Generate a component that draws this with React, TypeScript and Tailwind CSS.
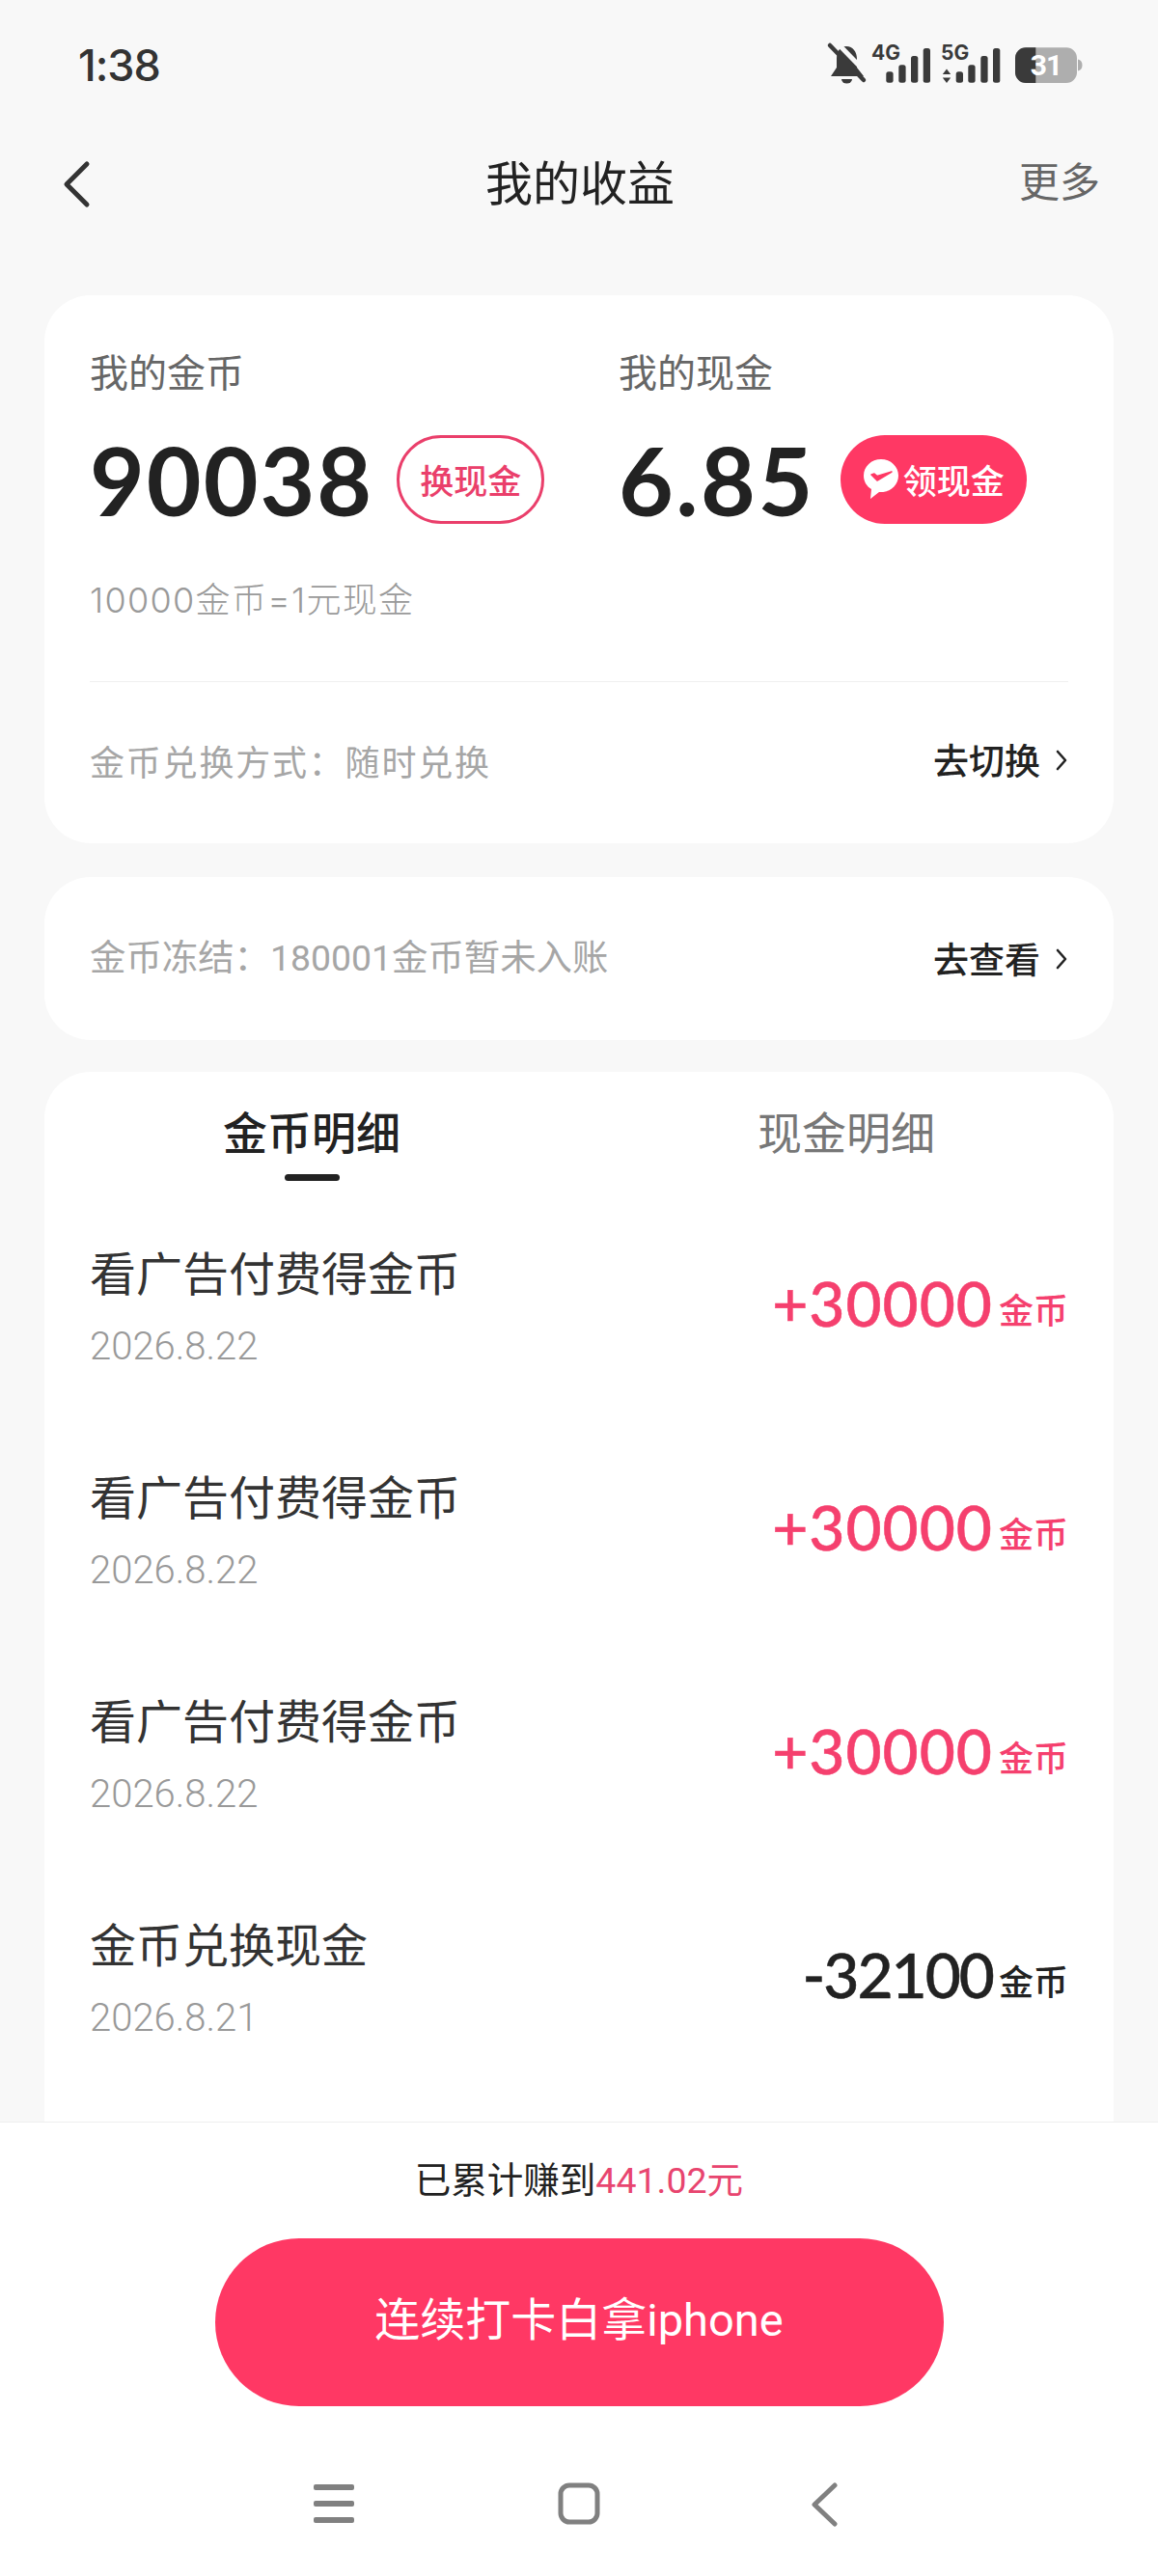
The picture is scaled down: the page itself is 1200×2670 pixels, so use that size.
import React from "react";

const Chevron = () => (
  <svg width="14" height="24" viewBox="0 0 14 24" className="ml-[15px]" fill="none">
    <path d="M3 3l8 9-8 9" stroke="#222" strokeWidth="2.6" strokeLinecap="round" strokeLinejoin="round" />
  </svg>
);

const StatusIcons = () => (
  <svg width="270" height="52" viewBox="0 0 270 52">
    <path d="M25 6C32 6 36 12 36 19L36 28L43 37L9 37L15 28L15 19C15 12 18 6 25 6Z" fill="#3a3a3a" />
    <path d="M20 40h11a5.500 4.500 0 0 1-11 0Z" fill="#3a3a3a" />
    <path d="M14 1L49 37" stroke="#f8f8f8" strokeWidth="5" />
    <path d="M8 5L43 41" stroke="#3a3a3a" strokeWidth="4.500" strokeLinecap="round" />
    <text x="51" y="20" fontSize="21" fontWeight="700" fill="#3a3a3a" fontFamily="Inter">4G</text>
    <rect x="66.300" y="32.300" width="7.300" height="11.400" rx="2.500" fill="#3a3a3a" />
    <rect x="79.300" y="25.300" width="7.300" height="18.400" rx="2.500" fill="#3a3a3a" />
    <rect x="92" y="16" width="7.300" height="27.700" rx="2.500" fill="#3a3a3a" />
    <rect x="104.700" y="8" width="7.300" height="35.700" rx="2.500" fill="#3a3a3a" />
    <text x="123" y="20" fontSize="21" fontWeight="700" fill="#3a3a3a" fontFamily="Inter">5G</text>
    <path d="M129 29.500l4.200 5.500h-8.400Z" fill="#3a3a3a" />
    <path d="M129 44l4.200-5.500h-8.400Z" fill="#3a3a3a" />
    <rect x="138.700" y="32.300" width="7.300" height="11.400" rx="2.500" fill="#3a3a3a" />
    <rect x="151.300" y="25.300" width="7.300" height="18.400" rx="2.500" fill="#3a3a3a" />
    <rect x="164.300" y="16" width="7.300" height="27.700" rx="2.500" fill="#3a3a3a" />
    <rect x="177" y="8" width="7.300" height="35.700" rx="2.500" fill="#3a3a3a" />
    <rect x="200" y="7.300" width="64" height="36.700" rx="11" fill="#aeaeae" />
    <path d="M265 19.500c3 .5 4.500 3 4.500 6s-1.500 5.500-4.500 6Z" fill="#aeaeae" />
    <path d="M221.300 7.300H211a11 11 0 0 0-11 11v14.700a11 11 0 0 0 11 11h10.300Z" fill="#3a3a3a" />
    <text x="232" y="36" fontSize="30" fontWeight="700" fill="#fff" textAnchor="middle" fontFamily="Roboto" letterSpacing="-1">31</text>
  </svg>
);

const WeChatCheck = () => (
  <svg width="38" height="44" viewBox="0 0 38 44" className="mr-[4px]">
    <path d="M19 1C9 1 1 8.500 1 18c0 6 3 11 8 14l-1 10 9-7c.700.100 1.300.100 2 .100 10 0 18-7.600 18-17.100S29 1 19 1Z" fill="#fff" />
    <path d="M9 17l6 6 15-9-15 4.500-3-2.500Z" fill="#ff3864" stroke="#ff3864" strokeWidth="1.500" strokeLinejoin="round" />
  </svg>
);

const rows = [
  { title: "看广告付费得金币", date: "2026.8.22", amount: "+30000", pink: true },
  { title: "看广告付费得金币", date: "2026.8.22", amount: "+30000", pink: true },
  { title: "看广告付费得金币", date: "2026.8.22", amount: "+30000", pink: true },
  { title: "金币兑换现金", date: "2026.8.21", amount: "-32100", pink: false },
];

export default function App() {
  return (
    <div className="w-[1200px] h-[2670px] flex flex-col overflow-hidden bg-[#f8f8f8] text-[#222222] font-['Noto_Sans_CJK_SC',sans-serif]">
      {/* status bar */}
      <div className="h-[136px] shrink-0 flex items-center justify-between pl-[81px] pr-[78px]">
        <span className="text-[45px] font-medium text-[#333333] tracking-[-1px] font-['Inter',sans-serif]">1:38</span>
        <StatusIcons />
      </div>

      {/* header */}
      <div className="h-[108px] shrink-0 grid grid-cols-[1fr_auto_1fr] items-center pl-[62px] pr-[60px] mb-[62px]">
        <svg width="34" height="50" viewBox="0 0 34 50" fill="none" className="mt-[2px]">
          <path d="M28 4L7 25l21 21" stroke="#333" strokeWidth="5" strokeLinecap="round" strokeLinejoin="round" />
        </svg>
        <span className="text-[49px] leading-[60px] mb-[6px]">我的收益</span>
        <span className="justify-self-end text-[42px] leading-[60px] text-[#666666] mb-[8px]">更多</span>
      </div>

      {/* main balance card */}
      <div className="mx-[46px] shrink-0 bg-white rounded-[48px] px-[47px] pt-[53px] pb-[61px]">
        <div className="flex">
          <div className="w-[548px]">
            <div className="text-[40px] leading-[50px] text-[#666666]">我的金币</div>
            <div className="mt-[42px] flex items-center h-[92px]">
              <span className="text-[98px] leading-[92px] font-bold tracking-[2px] font-['Lato',sans-serif]">90038</span>
              <span className="ml-[24px] w-[153px] h-[92px] rounded-full border-[3px] border-[#ea3f6b] flex items-center justify-center text-[35px] font-medium text-[#ea3f6b]">
                换现金
              </span>
            </div>
          </div>
          <div>
            <div className="text-[40px] leading-[50px] text-[#666666]">我的现金</div>
            <div className="mt-[42px] flex items-center h-[92px]">
              <span className="text-[98px] leading-[92px] font-bold tracking-[2.500px] font-['Lato',sans-serif]">6.85</span>
              <span className="ml-[26px] w-[193px] h-[92px] rounded-full bg-[#ff3864] flex items-center justify-center text-[35px] font-medium text-white">
                <WeChatCheck />
                领现金
              </span>
            </div>
          </div>
        </div>
        <div className="mt-[54px] text-[36px] leading-[50px] tracking-[1.300px] text-[#9a9a9a] font-['Inter','Noto_Sans_CJK_SC',sans-serif] font-light">
          10000金币=1元现金
        </div>
        <div className="mt-[59px] h-px bg-[#f0f0f0]" />
        <div className="mt-[56px] flex items-center justify-between h-[50px]">
          <span className="text-[36px] tracking-[1.800px] text-[#a6a6a6]">金币兑换方式：随时兑换</span>
          <span className="flex items-center text-[37px] font-medium text-[#222222]">
            去切换
            <Chevron />
          </span>
        </div>
      </div>

      {/* frozen card */}
      <div className="mx-[46px] mt-[35px] h-[169px] shrink-0 bg-white rounded-[48px] px-[47px] flex items-center justify-between">
        <span className="text-[37.400px] text-[#a6a6a6] font-['Roboto','Noto_Sans_CJK_SC',sans-serif]">金币冻结：180001金币暂未入账</span>
        <span className="flex items-center text-[37px] font-medium text-[#222222]">
          去查看
          <Chevron />
        </span>
      </div>

      {/* details card */}
      <div className="mx-[46px] mt-[33px] flex-1 min-h-0 overflow-hidden bg-white rounded-t-[48px]">
        <div className="grid grid-cols-2 h-[128px] pt-[30px]">
          <div className="flex flex-col items-center">
            <span className="text-[46px] leading-[60px] font-medium text-[#222222]">金币明细</span>
            <span className="mt-[16px] w-[57px] h-[7px] rounded-full bg-[#222222]" />
          </div>
          <div className="flex flex-col items-center">
            <span className="text-[46px] leading-[60px] text-[#777777]">现金明细</span>
          </div>
        </div>
        {rows.map((r, i) => (
          <div key={i} className="h-[232px] px-[47px] flex items-center justify-between">
            <div>
              <div className="text-[48px] leading-[60px] text-[#333333] mb-[24px] -mt-[3px]">{r.title}</div>
              <div className="text-[40px] leading-[50px] font-light text-[#999999] font-['Roboto',sans-serif]">{r.date}</div>
            </div>
            <div className={`flex items-baseline mb-[8px] ${r.pink ? "text-[#f5406e]" : "text-[#222222]"}`}>
              <span className={`text-[64px] leading-[70px] font-medium [-webkit-text-stroke:0.5px_currentColor] font-['Lato',sans-serif] ${r.pink ? "tracking-[1px]" : "tracking-[-2px]"}`}>{r.amount}</span>
              <span className="ml-[6px] text-[36px] leading-[40px] font-medium relative -top-[3px]">金币</span>
            </div>
          </div>
        ))}
      </div>

      {/* bottom bar */}
      <div className="h-[471px] shrink-0 bg-white border-t border-[#eeeeee] flex flex-col items-center pt-[32px]">
        <div className="text-[37.500px] leading-[50px] text-[#222222]">
          已累计赚到<span className="text-[#e8456f] font-['Roboto','Noto_Sans_CJK_SC',sans-serif]">441.02元</span>
        </div>
        <div className="mt-[35px] w-[755px] h-[174px] rounded-full bg-[#ff3864] flex items-center justify-center pb-[3px] text-[47px] text-white font-['Roboto','Noto_Sans_CJK_SC',sans-serif]">
          连续打卡白拿iphone
        </div>
        <div className="mt-[79px] w-[762px] grid grid-cols-3">
          <div className="flex justify-center">
            <svg width="42" height="44" viewBox="0 0 42 44" fill="#808080">
              <rect x="0" y="2" width="42" height="6" rx="2" />
              <rect x="0" y="19" width="42" height="6" rx="2" />
              <rect x="0" y="36" width="42" height="6" rx="2" />
            </svg>
          </div>
          <div className="flex justify-center">
            <svg width="44" height="44" viewBox="0 0 44 44" fill="none">
              <rect x="3" y="3" width="38" height="38" rx="9" stroke="#808080" strokeWidth="5" />
            </svg>
          </div>
          <div className="flex justify-center">
            <svg width="28" height="46" viewBox="0 0 28 46" fill="none">
              <path d="M25 3L4 23l21 20" stroke="#808080" strokeWidth="5" strokeLinecap="round" strokeLinejoin="round" />
            </svg>
          </div>
        </div>
      </div>
    </div>
  );
}
